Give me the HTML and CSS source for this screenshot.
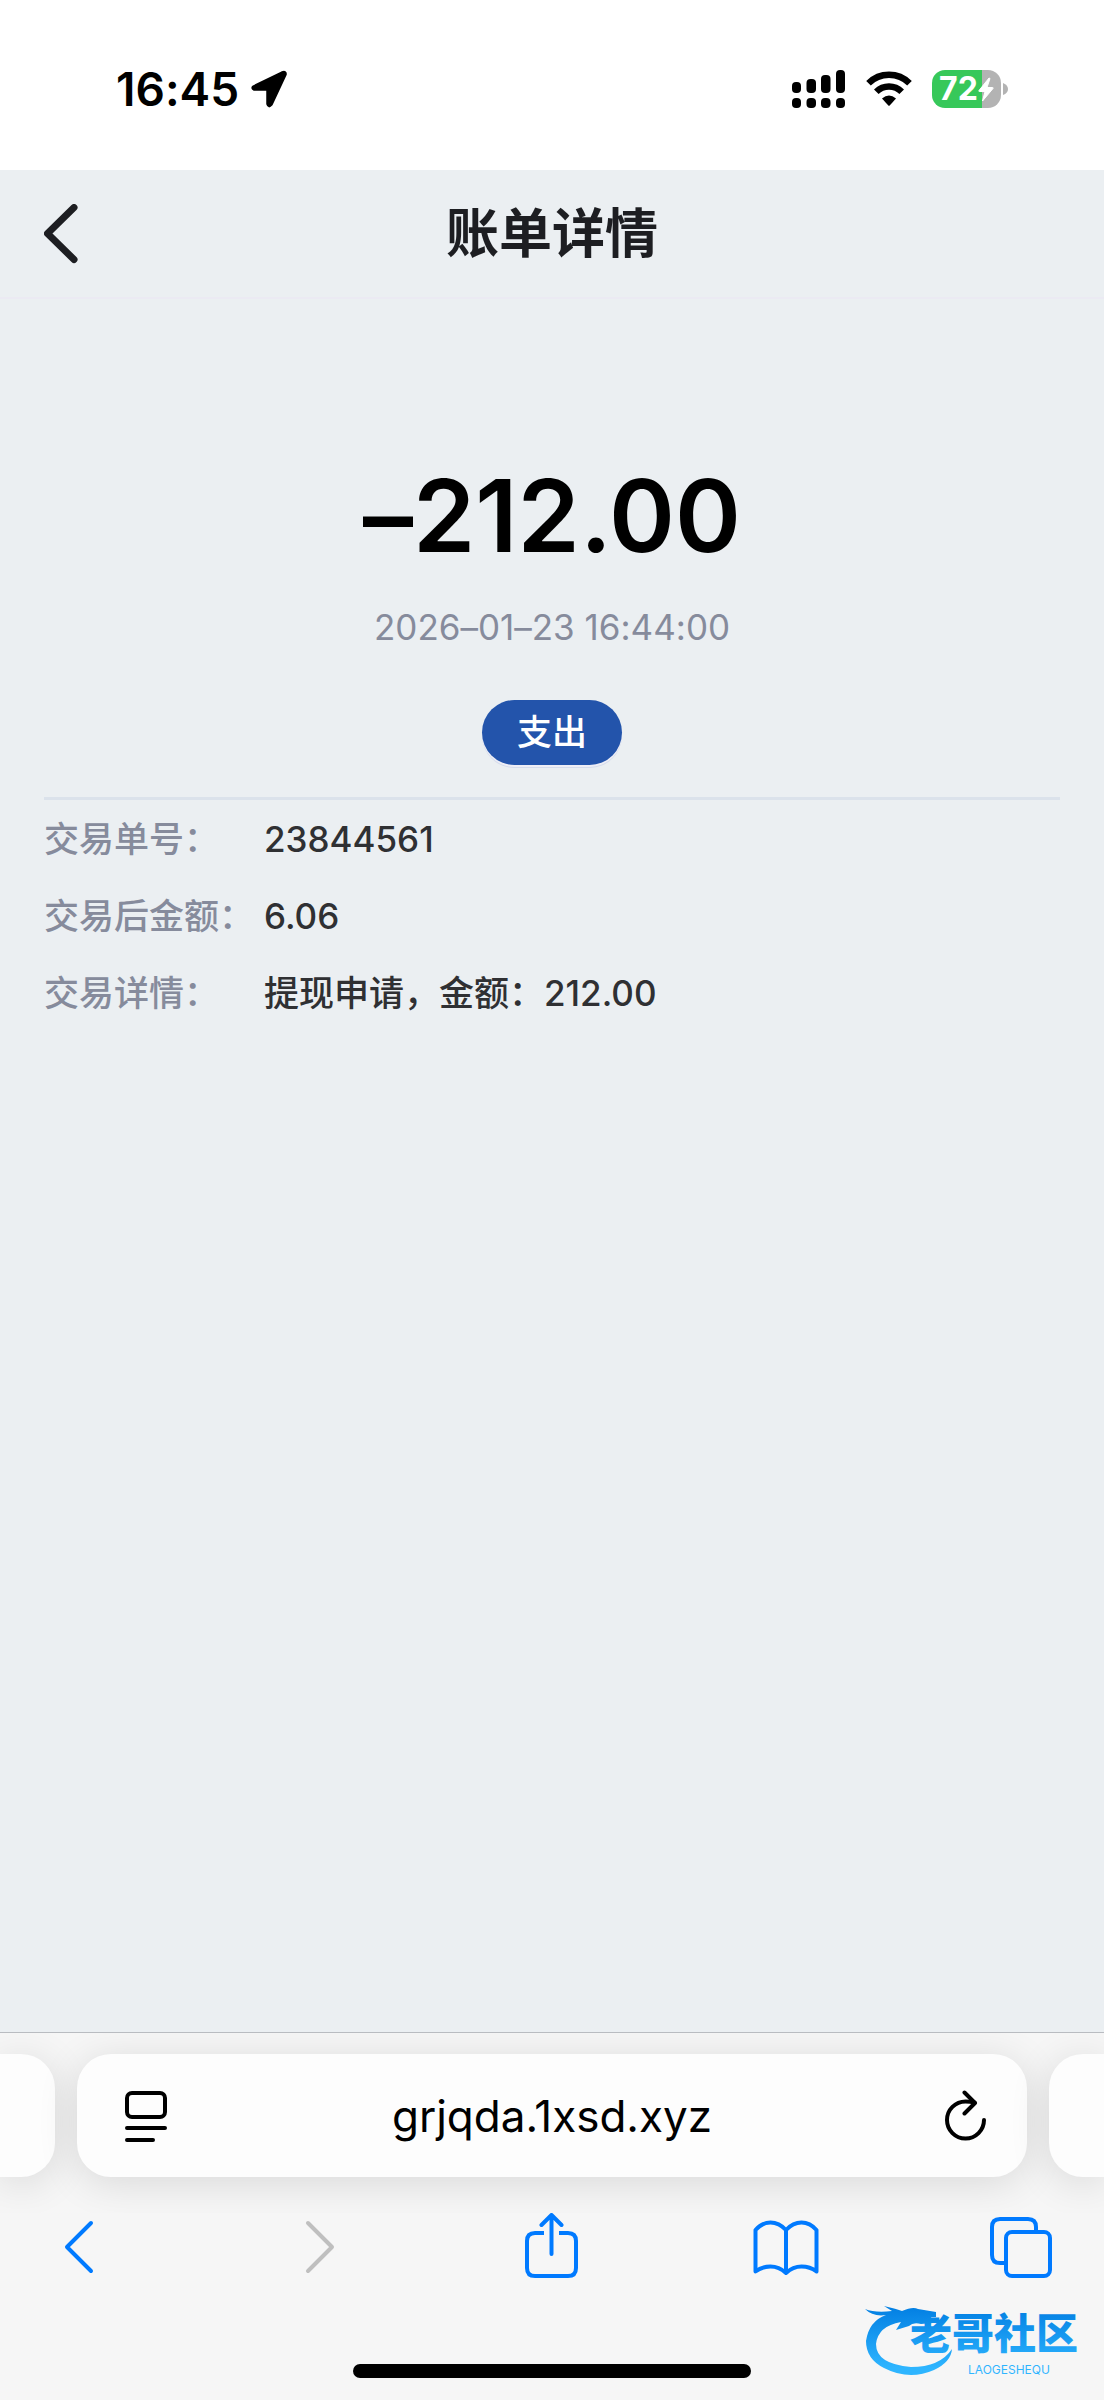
FILE: index.html
```html
<!DOCTYPE html>
<html lang="zh-CN">
<head>
<meta charset="utf-8">
<meta name="viewport" content="width=device-width, initial-scale=1">
<title>账单详情</title>
<link rel="stylesheet" href="styles.css">
</head>
<body>
<div class="status-bar">
  <div class="status-left">
    <span class="clock">16:45</span>
    <svg class="icon" width="36" height="38" viewBox="0 0 36 38" aria-hidden="true"><path d="M31 2.5 2.500 16.500Q.5 18 3 19.500H16.500V34Q17.500 38 20.500 34.500L34.500 4.500Q35 1 31 2.500Z" fill="#000" stroke="#000" stroke-width="2.500" stroke-linejoin="round"/></svg>
  </div>
  <div class="status-right">
    <svg class="icon" width="54" height="38" viewBox="0 0 54 38" aria-hidden="true"><g fill="#000"><rect x="0" y="12" width="9" height="11" rx="4"/><rect x="14.500" y="9" width="9.500" height="14" rx="4"/><rect x="29" y="5" width="9.500" height="18" rx="4"/><rect x="44" y="0" width="9" height="23" rx="4"/><rect x="0" y="28" width="9" height="10" rx="4"/><rect x="14.500" y="28" width="9.500" height="10" rx="4"/><rect x="29" y="28" width="9.500" height="10" rx="4"/><rect x="44" y="28" width="9" height="10" rx="4"/></g></svg>
    <svg class="icon" width="46" height="38" viewBox="0 0 46 38" aria-hidden="true"><g fill="none" stroke="#000" stroke-width="6.500"><path d="M2.500 13.200A29 29 0 0 1 43.500 13.200"/><path d="M10.300 21.800A18 18 0 0 1 35.700 21.800"/></g><path d="M16 28.500Q23 22.500 30 28.500L23.700 35.500Q23 36.200 22.300 35.500Z" fill="#000"/></svg>
    <div class="battery">
      <div class="battery-body"><span class="battery-level">72</span><svg class="icon" width="16" height="25" viewBox="0 0 16 25" aria-hidden="true"><path d="M11 1 1 13.500Q.5 14.500 1.500 14.500H7L4.500 24 15 11.500Q15.500 10.500 14.500 10.500H9L12 1.500Z" fill="#fff" stroke="#fff"/></svg></div>
      <svg class="icon" width="5" height="12" viewBox="0 0 5 12" aria-hidden="true"><path d="M0 0Q5 2 5 6T0 12Z" fill="#b3b3b3"/></svg>
    </div>
  </div>
</div>

<header class="page-header">
  <button class="header-back" type="button" aria-label="返回"><svg class="icon" width="34" height="60" viewBox="0 0 34 60" aria-hidden="true"><path d="M30 3.500 3.500 29.500 30 55.500" fill="none" stroke="#1d1e22" stroke-width="7" stroke-linecap="round" stroke-linejoin="round"/></svg></button>
  <h1 class="page-title">账单详情</h1>
</header>

<main class="bill">
  <section class="summary">
    <p class="amount">–212.00</p>
    <time class="time" datetime="2026-01-23T16:44:00">2026–01–23 16:44:00</time>
    <span class="tag">支出</span>
  </section>
  <dl class="details">
    <div class="detail"><dt>交易单号：</dt><dd>23844561</dd></div>
    <div class="detail"><dt>交易后金额：</dt><dd>6.06</dd></div>
    <div class="detail"><dt>交易详情：</dt><dd>提现申请，金额：212.00</dd></div>
  </dl>
</main>

<footer class="browser">
  <div class="tabs-row">
    <div class="tab-peek tab-peek-left"></div>
    <div class="address-bar">
      <button type="button" aria-label="页面设置"><svg class="icon" width="42" height="52" viewBox="0 0 42 52" aria-hidden="true"><g fill="none" stroke="#000" stroke-width="4" stroke-linecap="round"><rect x="2" y="3" width="38" height="24" rx="5"/><path d="M2 38H40M2 50H28"/></g></svg></button>
      <input class="address" type="text" value="grjqda.1xsd.xyz" aria-label="网址">
      <button type="button" aria-label="重新载入"><svg class="icon" width="42" height="52" viewBox="0 0 42 52" aria-hidden="true"><g fill="none" stroke="#000" stroke-width="4" stroke-linecap="round" stroke-linejoin="round"><path d="M39 30A18.500 18.500 0 1 1 20.500 11.500Q25 11.500 29.500 12.500"/><path d="M19.500 2.500 30 13 19.500 23.500"/></g></svg></button>
    </div>
    <div class="tab-peek tab-peek-right"></div>
  </div>
  <nav class="toolbar" aria-label="浏览器工具栏">
    <button type="button" aria-label="后退"><svg class="icon" width="66" height="66" viewBox="0 0 66 66" aria-hidden="true"><path class="line" d="M45 10 21 34 45 58"/></svg></button>
    <button type="button" aria-label="前进" disabled><svg class="icon" width="66" height="66" viewBox="0 0 66 66" aria-hidden="true"><path class="line" d="M26 10 50 34 26 58"/></svg></button>
    <button type="button" aria-label="分享"><svg class="icon" width="66" height="66" viewBox="0 0 66 66" aria-hidden="true"><path class="line line-butt" d="M27 20H18Q10 20 10 28V55Q10 63 18 63H51Q59 63 59 55V28Q59 20 51 20H42"/><path class="line" d="M34.500 41V3M24.500 12 34.500 2 44.500 12"/></svg></button>
    <button type="button" aria-label="书签"><svg class="icon" width="66" height="66" viewBox="0 0 66 66" aria-hidden="true"><path class="line" d="M33 17Q26 9.500 17.500 9.500T2.500 17V58.500Q9 53.500 17.500 53.500T33 60Q40 53.500 48.500 53.500T63.500 58.500V17Q57 9.500 48.500 9.500T33 17ZM33 17V60"/></svg></button>
    <button type="button" aria-label="标签页"><svg class="icon" width="66" height="66" viewBox="0 0 66 66" aria-hidden="true"><g class="line line-butt"><rect x="18" y="19" width="44" height="44" rx="6"/><path d="M18 50H12Q4 50 4 42V14Q4 6 12 6H40Q48 6 48 14V19"/></g></svg></button>
  </nav>
  <div class="home-indicator"></div>
  <svg class="watermark" width="226" height="80" viewBox="0 0 226 80" role="img" aria-label="老哥社区 LAOGESHEQU">
    <defs><linearGradient id="ink" gradientUnits="userSpaceOnUse" x1="0" y1="10" x2="0" y2="70"><stop offset="0" stop-color="#0380e3"/><stop offset="1" stop-color="#2eb5ff"/></linearGradient></defs>
    <g fill="url(#ink)">
      <path d="M1 11Q11 15 28 13L20 8Q33 11 38 13Q49 8 54 11L72 14V19L64 19Q70 21 69 25L57 26Q49 24 45 28L32 32 37 24Q14 28 12 46Q12 66 47 69Q76 69 88 51Q87 64 70 72Q45 83 20 70Q2 61 2 43Q5 23 22 17Q9 19 1 11Z"/>
      <text class="logo-name" x="46" y="51">老哥社区</text>
      <text class="logo-latin" x="104" y="76">LAOGESHEQU</text>
    </g>
  </svg>
</footer>
</body>
</html>
```

FILE: styles.css
```css
* {
  box-sizing: border-box;
}

body {
  display: flex;
  flex-direction: column;
  min-height: 100vh;
  margin: 0;
  background: #ebeff2;
  color: #2f3033;
  font-family: Inter, "Noto Sans CJK SC", sans-serif;
  font-feature-settings: "calt" 0;
}

button {
  display: flex;
  padding: 0;
  border: 0;
  background: none;
}

.icon {
  display: block;
  flex: none;
}

/* Phone status bar */

.status-bar {
  display: flex;
  justify-content: space-between;
  height: 170px;
  padding: 60px 96px 0 116px;
  background: #fff;
  color: #000;
}

.status-left,
.status-right {
  display: flex;
  align-items: center;
  height: 58px;
}

.status-left {
  gap: 12px;
}

.status-right {
  gap: 20px;
}

.clock {
  font-size: 46px;
  font-weight: 600;
}

.battery {
  display: flex;
  align-items: center;
  gap: 2px;
}

.battery-body {
  display: flex;
  align-items: center;
  justify-content: center;
  width: 69px;
  height: 38px;
  border-radius: 13px;
  background: linear-gradient(to right, #37c85a 72%, #b3b3b3 72%);
}

.battery-level {
  color: #fff;
  font-size: 32px;
  font-weight: 700;
  line-height: 38px;
}

/* Page header */

.page-header {
  display: grid;
  grid-template-columns: 64px 1fr 64px;
  align-items: center;
  height: 129px;
  padding: 0 44px;
  border-bottom: 2px solid #ebeaf3;
}

.page-title {
  margin: 0;
  color: #1d1e22;
  font-size: 53px;
  font-weight: 600;
  line-height: 72px;
  text-align: center;
}

/* Bill */

.bill {
  flex: 1;
  padding: 157px 44px 0;
}

.summary {
  display: flex;
  flex-direction: column;
  align-items: center;
  padding-bottom: 32px;
  border-bottom: 3px solid #dbe2eb;
}

.amount {
  margin: 0;
  color: #000;
  font-size: 100px;
  font-weight: 600;
  line-height: 120px;
}

.time {
  margin-top: 27px;
  color: #868b9c;
  font-size: 35px;
  line-height: 48px;
}

.tag {
  margin-top: 49px;
  padding: 0 35px;
  border-radius: 33px;
  background: #2354ab;
  box-shadow: 0 2px 0 #eeeef6, 0 3px 0 #d5dcec;
  color: #fff;
  font-size: 35px;
  font-weight: 500;
  line-height: 65px;
}

.details {
  display: grid;
  gap: 29px;
  margin: 15px 0 0;
}

.detail {
  display: grid;
  grid-template-columns: 220px 1fr;
  font-size: 35px;
  font-weight: 500;
  line-height: 48px;
}

.detail dt {
  color: #868b9c;
  white-space: nowrap;
}

.detail dd {
  margin: 0;
}

/* Browser controls */

.browser {
  position: relative;
  padding-bottom: 22px;
  border-top: 1px solid #b9bcc1;
  background: #f6f6f6;
}

.tabs-row {
  display: grid;
  grid-template-columns: 55px 1fr 55px;
  gap: 22px;
  padding: 21px 0 36px;
  overflow: hidden;
}

.tab-peek,
.address-bar {
  height: 123px;
  border-radius: 34px;
  background: #fdfdfd;
  box-shadow: 0 6px 40px rgb(0 0 0 / 12%);
}

.tab-peek-left {
  border-radius: 0 34px 34px 0;
}

.tab-peek-right {
  border-radius: 34px 0 0 34px;
}

.address-bar {
  display: flex;
  align-items: center;
  padding: 0 40px 0 48px;
}

.address {
  flex: 1;
  min-width: 0;
  padding: 0 8px 0 0;
  border: 0;
  background: none;
  color: #000;
  font-family: inherit;
  font-size: 44px;
  line-height: 60px;
  text-align: center;
}

.toolbar {
  display: flex;
  justify-content: space-between;
  padding: 0 50px 0 46px;
}

.toolbar button {
  color: #007aff;
}

.toolbar button:disabled {
  color: #bfbfbf;
}

.line {
  fill: none;
  stroke: currentcolor;
  stroke-width: 4;
  stroke-linecap: round;
  stroke-linejoin: round;
}

.line-butt {
  stroke-linecap: butt;
}

.home-indicator {
  width: 36%;
  height: 14px;
  margin: 85px auto 0;
  border-radius: 7px;
  background: #000;
}

.watermark {
  position: absolute;
  right: 14px;
  bottom: 22px;
}

.logo-name {
  font-family: "Noto Sans CJK SC", sans-serif;
  font-size: 42px;
  font-weight: 900;
}

.logo-latin {
  font-size: 12px;
}
```
